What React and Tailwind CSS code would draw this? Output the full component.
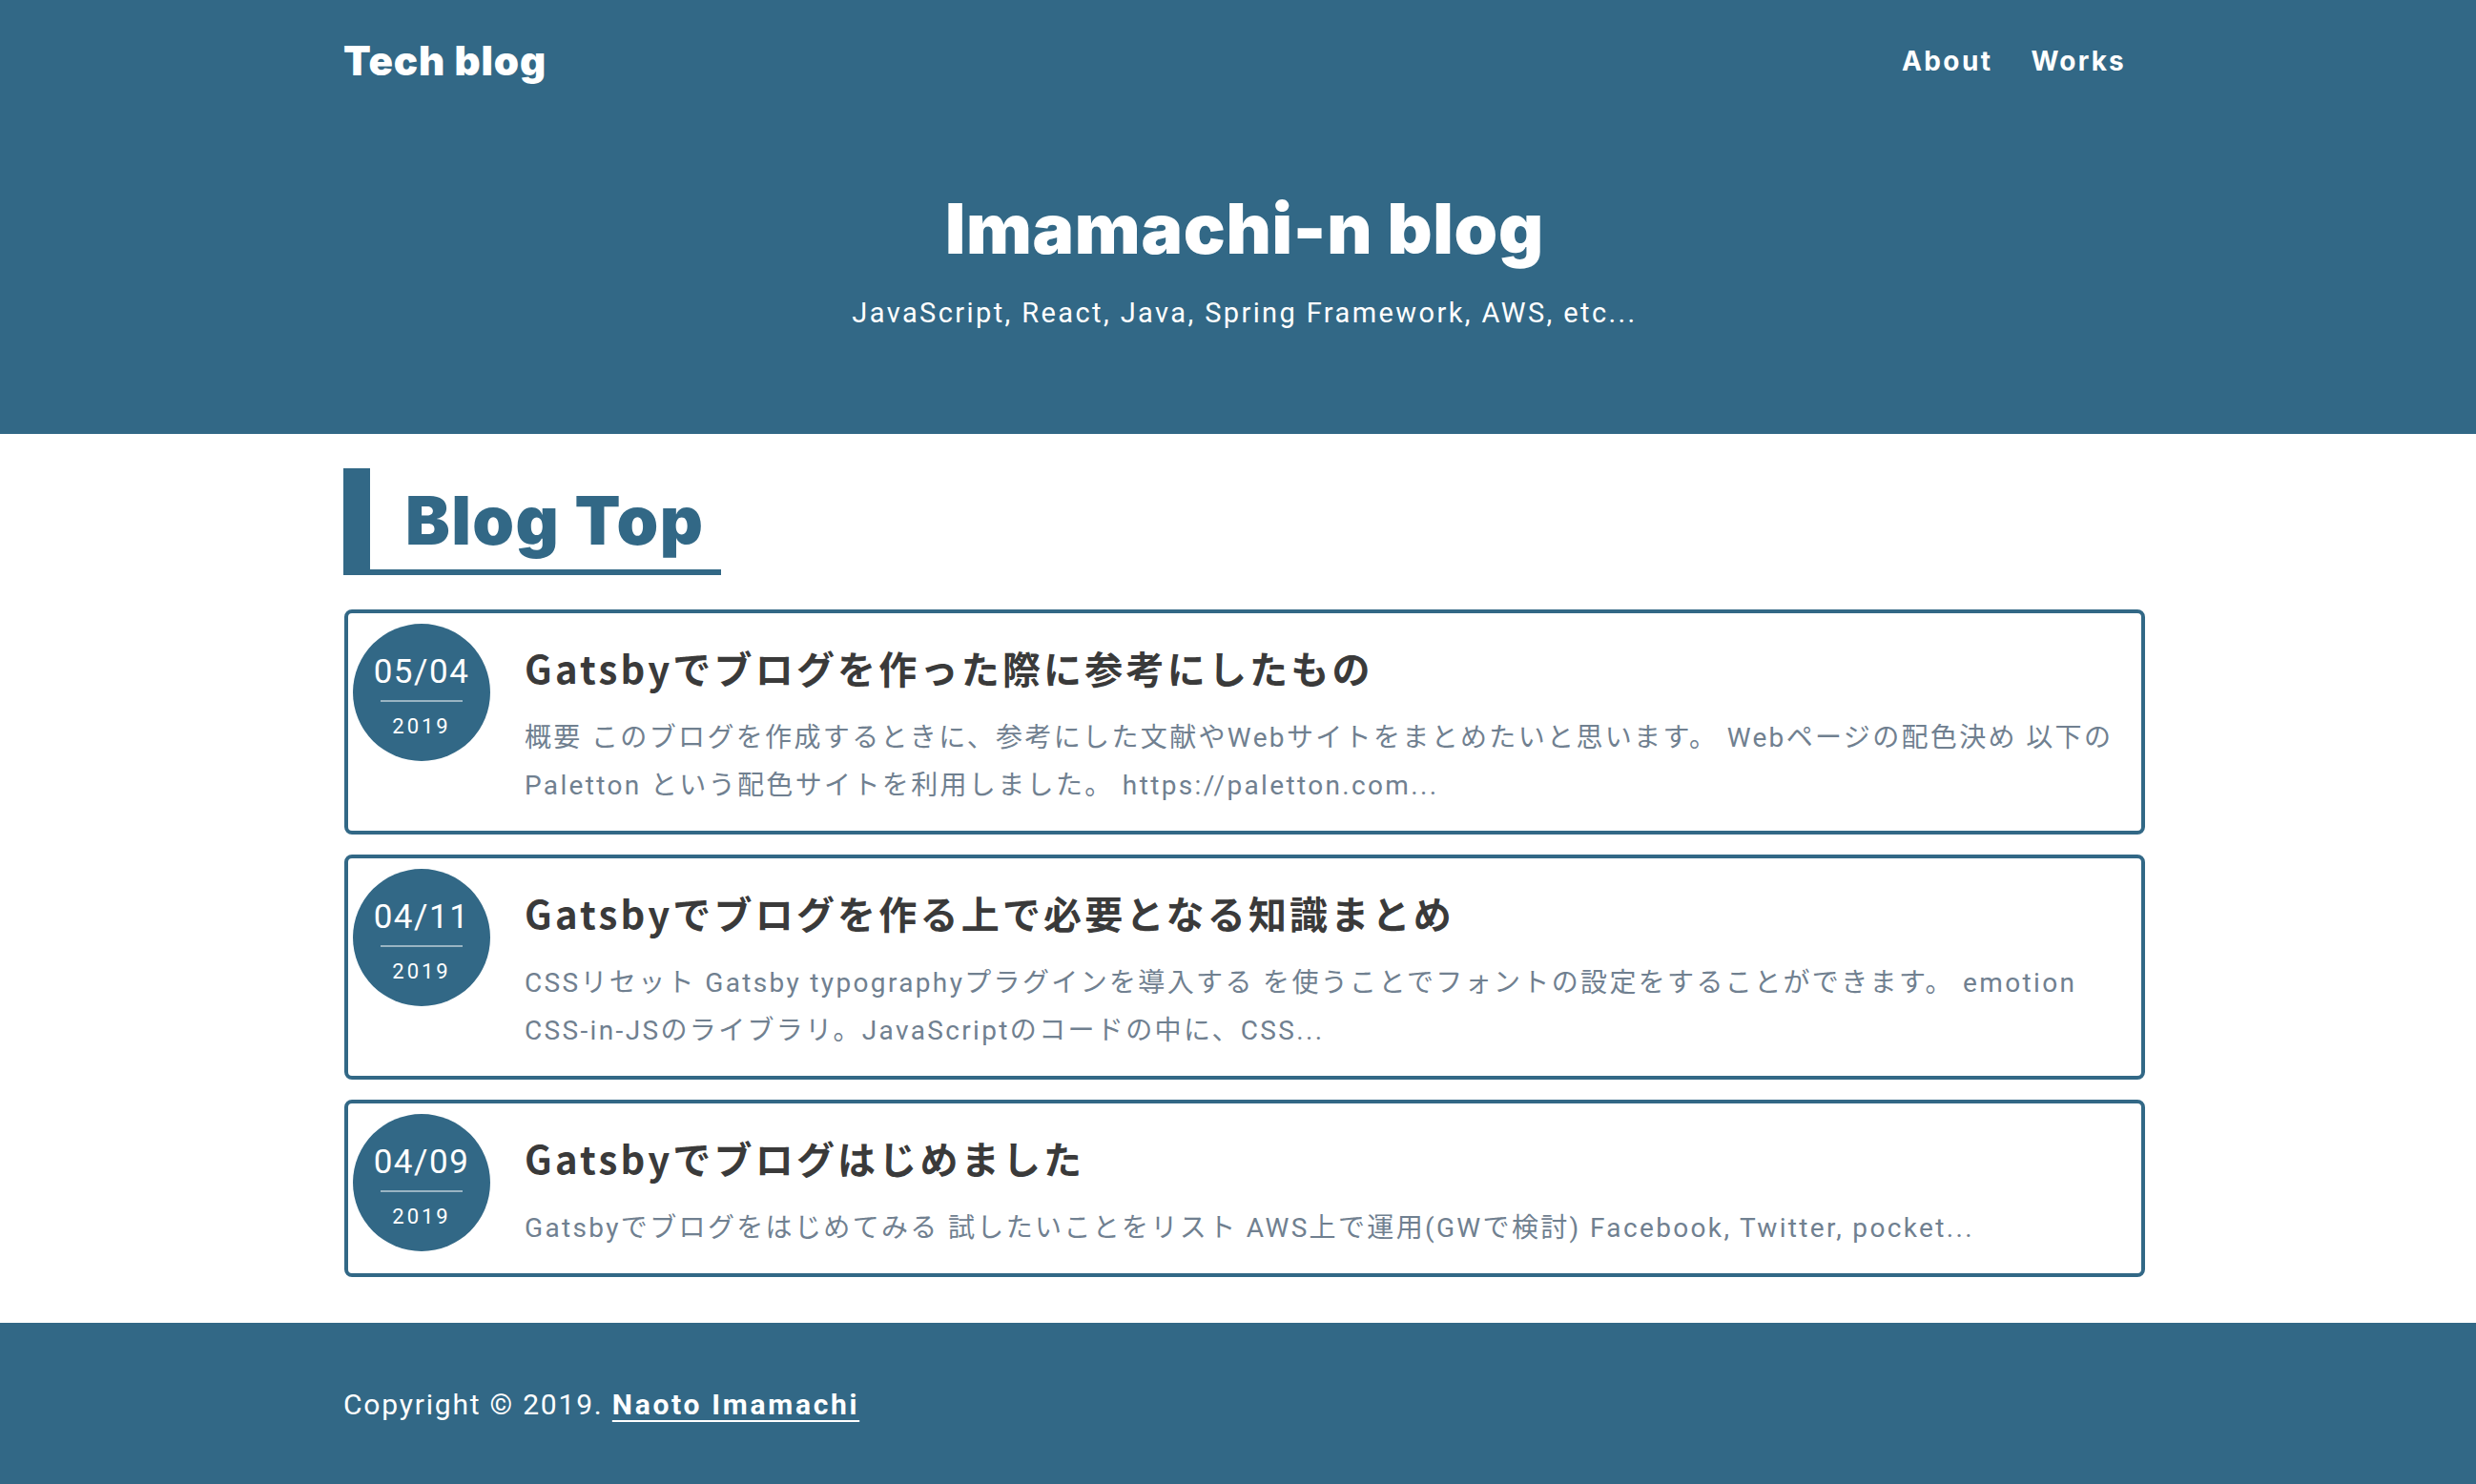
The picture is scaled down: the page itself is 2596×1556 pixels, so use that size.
const posts = [
  {
    date: "05/04",
    year: "2019",
    title: "Gatsbyでブログを作った際に参考にしたもの",
    lines: [
      "概要 このブログを作成するときに、参考にした文献やWebサイトをまとめたいと思います。 Webページの配色決め 以下の",
      "Paletton という配色サイトを利用しました。 https://paletton.com...",
    ],
  },
  {
    date: "04/11",
    year: "2019",
    title: "Gatsbyでブログを作る上で必要となる知識まとめ",
    lines: [
      "CSSリセット Gatsby typographyプラグインを導入する を使うことでフォントの設定をすることができます。 emotion",
      "CSS-in-JSのライブラリ。JavaScriptのコードの中に、CSS...",
    ],
  },
  {
    date: "04/09",
    year: "2019",
    title: "Gatsbyでブログはじめました",
    lines: [
      "Gatsbyでブログをはじめてみる 試したいことをリスト AWS上で運用(GWで検討) Facebook, Twitter, pocket...",
    ],
  },
];

function PostCard({ post }) {
  return (
    <article className="flex items-start rounded-[8px] border-4 border-[#326886] pb-[22px] pl-[5px] pr-[30px] pt-[11px]">
      <div className="flex h-[144px] w-[144px] shrink-0 flex-col items-center rounded-full bg-[#326886] pt-[31px] text-white">
        <div className="text-[35px] leading-[40px] tracking-[1.5px]">{post.date}</div>
        <div className="mt-[9px] h-[2px] w-[86px] bg-white/50" />
        <div className="mt-[12px] text-[22px] leading-[28px] tracking-[3px]">{post.year}</div>
      </div>
      <div className="ml-[36px] min-w-0 pt-[16px]">
        <h3 className="whitespace-nowrap font-['Noto_Sans_CJK_JP',sans-serif] text-[40px] font-bold leading-[60px] tracking-[3.2px] text-[#3a3a3a]">
          {post.title}
        </h3>
        <p className="mt-[19px] text-[28px] leading-[50px] tracking-[2.35px] text-[#708090]">
          {post.lines.map((l, i) => (
            <span key={i} className="block whitespace-nowrap">
              {l}
            </span>
          ))}
        </p>
      </div>
    </article>
  );
}

export default function App() {
  return (
    <div className="min-h-[1556px] bg-white font-[Roboto,'Noto_Sans_CJK_JP',sans-serif]">
      <header className="bg-[#326886] pb-[107px] pl-[14px] text-white">
        <div className="mx-auto w-[1888px]">
          <div className="flex h-[128px] items-center justify-between">
            <a className="-ml-[1px] font-[Inter,sans-serif] text-[42px] font-black leading-none tracking-[0.9px]">
              Tech blog
            </a>
            <nav className="flex">
              <a className="px-[20px] font-[Inter,sans-serif] text-[28px] font-bold leading-none tracking-[2.4px]">
                About
              </a>
              <a className="px-[20px] font-[Inter,sans-serif] text-[28px] font-bold leading-none tracking-[2.2px]">
                Works
              </a>
            </nav>
          </div>
          <h1 className="mt-[69px] text-center font-[Inter,sans-serif] text-[73px] font-black leading-[86px] tracking-[0.7px]">
            Imamachi-n blog
          </h1>
          <p className="mt-[25px] text-center text-[29px] leading-[40px] tracking-[2.4px]">
            JavaScript, React, Java, Spring Framework, AWS, etc...
          </p>
        </div>
      </header>

      <main className="pb-[48px] pl-[14px] pt-[36px]">
        <div className="mx-auto w-[1888px]">
          <div className="-ml-[1px] flex h-[112px] w-[396px] items-center border-b-[6px] border-l-[28px] border-[#326886] pl-[37px] pt-[4px]">
            <h2 className="font-[Inter,sans-serif] text-[70px] font-black leading-none tracking-[1.4px] text-[#326886]">
              Blog Top
            </h2>
          </div>
          <div className="mt-[36px] flex flex-col gap-[21px]">
            {posts.map((p) => (
              <PostCard key={p.date} post={p} />
            ))}
          </div>
        </div>
      </main>

      <footer className="bg-[#326886] pl-[14px] text-white">
        <div className="mx-auto flex h-[170px] w-[1888px] items-center">
          <p className="-ml-[1px] text-[30px] tracking-[1.8px]">
            Copyright © 2019.{" "}
            <a className="font-bold tracking-[2.7px] underline decoration-2 underline-offset-[6px]">Naoto Imamachi</a>
          </p>
        </div>
      </footer>
    </div>
  );
}
